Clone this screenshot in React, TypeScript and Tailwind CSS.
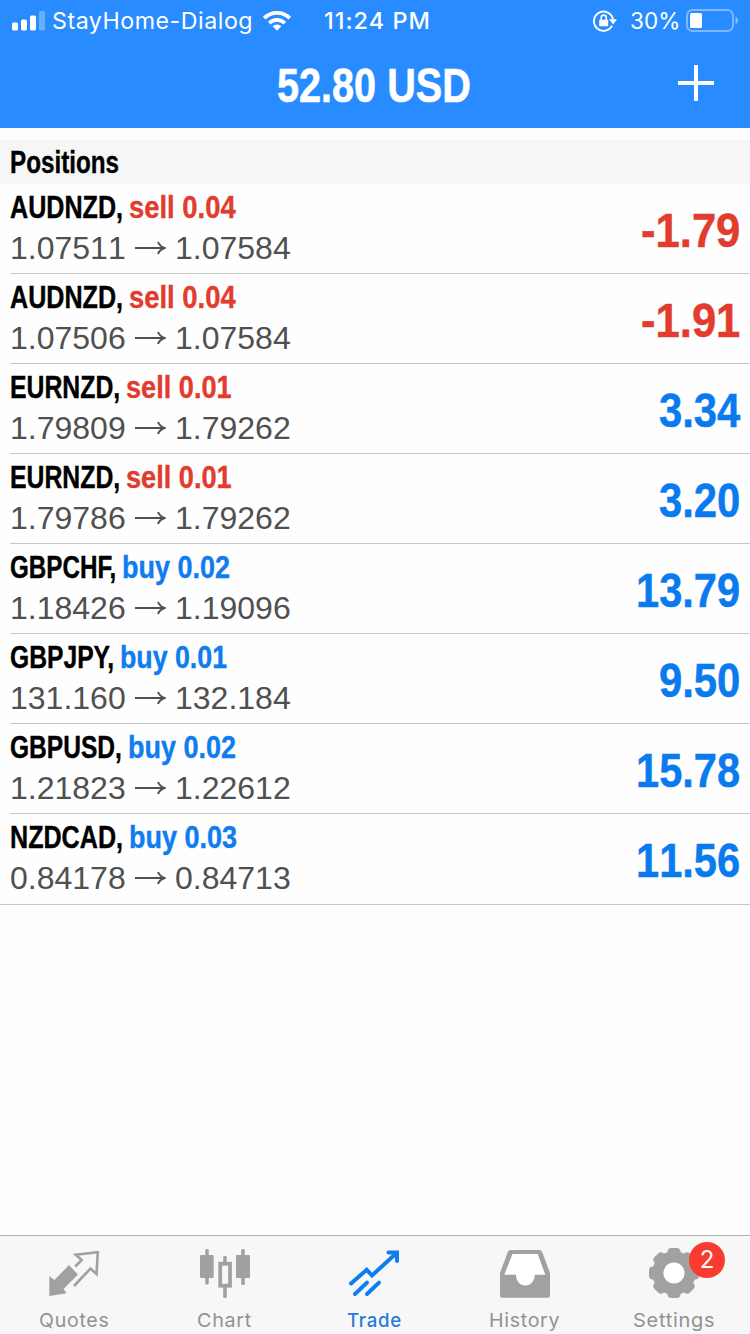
import React, { useLayoutEffect, useRef, useState } from "react";

type FitTextProps = {
  width: number;
  className?: string;
  children: React.ReactNode;
};

// Squeezes a line of text horizontally so it takes exactly `width` pixels.
const FitText = ({ width, className = "", children }: FitTextProps) => {
  const ref = useRef<HTMLSpanElement>(null);
  const [scale, setScale] = useState(1);

  useLayoutEffect(() => {
    if (ref.current) setScale(width / ref.current.offsetWidth);
  }, [width, children]);

  return (
    <span className={`block shrink-0 whitespace-pre ${className}`} style={{ width }}>
      <span
        ref={ref}
        className="inline-block origin-left"
        style={{ transform: `scaleX(${scale})` }}
      >
        {children}
      </span>
    </span>
  );
};

type Position = {
  symbol: string;
  symbolWidth: number;
  side: "buy" | "sell";
  volume: string;
  sideWidth: number;
  open: string;
  current: string;
  profit: string;
  profitWidth: number;
};

const positions: Position[] = [
  { symbol: "AUDNZD", symbolWidth: 113, side: "sell", volume: "0.04", sideWidth: 107, open: "1.07511", current: "1.07584", profit: "-1.79", profitWidth: 99 },
  { symbol: "AUDNZD", symbolWidth: 113, side: "sell", volume: "0.04", sideWidth: 107, open: "1.07506", current: "1.07584", profit: "-1.91", profitWidth: 99 },
  { symbol: "EURNZD", symbolWidth: 110, side: "sell", volume: "0.01", sideWidth: 106, open: "1.79809", current: "1.79262", profit: "3.34", profitWidth: 81 },
  { symbol: "EURNZD", symbolWidth: 110, side: "sell", volume: "0.01", sideWidth: 106, open: "1.79786", current: "1.79262", profit: "3.20", profitWidth: 81 },
  { symbol: "GBPCHF", symbolWidth: 106, side: "buy", volume: "0.02", sideWidth: 108, open: "1.18426", current: "1.19096", profit: "13.79", profitWidth: 104 },
  { symbol: "GBPJPY", symbolWidth: 104, side: "buy", volume: "0.01", sideWidth: 107, open: "131.160", current: "132.184", profit: "9.50", profitWidth: 81 },
  { symbol: "GBPUSD", symbolWidth: 112, side: "buy", volume: "0.02", sideWidth: 108, open: "1.21823", current: "1.22612", profit: "15.78", profitWidth: 104 },
  { symbol: "NZDCAD", symbolWidth: 113, side: "buy", volume: "0.03", sideWidth: 108, open: "0.84178", current: "0.84713", profit: "11.56", profitWidth: 104 },
];

const StatusBar = () => {
  return (
    <div className="flex h-10 items-center pl-3 pt-px font-['Inter',sans-serif] text-[23px] leading-10">
      <svg width="34" height="22" viewBox="0 0 34 22" fill="#fff">
        <rect x="0" y="12.5" width="6" height="8" rx="1.5" />
        <rect x="9" y="9.5" width="6" height="11" rx="1.5" />
        <rect x="18" y="5.5" width="6" height="15" rx="1.5" />
        <rect x="27" y="1" width="6" height="19.5" rx="1.5" opacity="0.3" />
      </svg>
      <FitText width={201} className="ml-[6px] tracking-[0.5px]">
        StayHome-Dialog
      </FitText>
      <svg className="ml-[9px]" width="30" height="22" viewBox="0 0 30 22" fill="none" stroke="#fff" strokeWidth="3.8">
        <path d="M2.2 8.2a18 18 0 0 1 25.6 0" />
        <path d="M7.2 13.2a11 11 0 0 1 15.6 0" />
        <path d="M15 20.8l-4.4-4.6a6.3 6.3 0 0 1 8.8 0z" fill="#fff" stroke="none" />
      </svg>
      <FitText width={107} className="ml-8 font-medium tracking-[1px]">
        11:24 PM
      </FitText>
      <svg className="ml-[161px]" width="26" height="24" viewBox="0 0 26 24" fill="none" stroke="#fff">
        <path d="M20 16.8A9.6 9.6 0 1 1 21 10.5" strokeWidth="1.9" />
        <path d="M17 10.2h8l-3.8 5.2z" fill="#fff" stroke="none" />
        <rect x="7.2" y="10.8" width="9" height="6.4" rx="0.8" fill="#fff" stroke="none" />
        <path d="M9.2 11V8.6a2.5 2.5 0 0 1 5 0V11" strokeWidth="1.6" />
      </svg>
      <FitText width={50} className="ml-3">
        30%
      </FitText>
      <svg className="ml-[6px]" width="54" height="24" viewBox="0 0 54 24">
        <rect x="1" y="1" width="46" height="21" rx="5.5" fill="none" stroke="#fff" strokeWidth="2" opacity="0.4" />
        <rect x="4" y="4" width="12" height="15" rx="1.5" fill="#fff" />
        <path d="M49.5 8c3.5 1 3.5 6 0 7z" fill="#fff" opacity="0.45" />
      </svg>
    </div>
  );
};

const Header = () => {
  return (
    <header className="h-32 shrink-0 bg-[#288bff] text-white">
      <StatusBar />
      <div className="flex h-[88px] items-center justify-between pl-[277px] pr-9">
        <FitText width={194} className="pt-[3px] text-5xl font-bold [-webkit-text-stroke:0.6px]">
          52.80 USD
        </FitText>
        <svg className="mb-[2px]" width="36" height="36" viewBox="0 0 36 36" stroke="#fff" strokeWidth="4">
          <path d="M18 0v36M0 18h36" />
        </svg>
      </div>
    </header>
  );
};

const PositionRow = ({ position, last }: { position: Position; last: boolean }) => {
  const { symbol, symbolWidth, side, volume, sideWidth, open, current, profit, profitWidth } = position;
  return (
    <li className={last ? "h-[91px] border-b border-[#c8c7cc] pl-2.5" : "h-[90px] pl-2.5"}>
      <div className={`flex h-[90px] justify-between pr-2.5 ${last ? "" : "border-b border-[#c8c7cc]"}`}>
        <div className="pt-[3px] text-[32px] leading-10">
          <div className="flex font-bold [-webkit-text-stroke:0.4px]">
            <FitText width={symbolWidth} className="text-black">
              {symbol + ","}
            </FitText>
            <FitText
              width={sideWidth}
              className={side === "buy" ? "ml-[6px] text-[#0f7cf0]" : "ml-[6px] text-[#e23c2e]"}
            >
              {side + " " + volume}
            </FitText>
          </div>
          <div className="mt-px flex items-center text-[#505050] [font-kerning:none]">
            <span className="w-[116px]">{open}</span>
            <svg className="ml-[9px]" width="31" height="16" viewBox="0 0 31 16" fill="none" stroke="currentColor" strokeWidth="2">
              <path d="M0 8h29" />
              <path d="M23 2c1.2 3 3.5 5 6.5 6-3 1-5.3 3-6.5 6" />
            </svg>
            <span className="ml-[9px]">{current}</span>
          </div>
        </div>
        <FitText
          width={profitWidth}
          className={
            profit.startsWith("-")
              ? "pt-[2px] text-5xl font-bold leading-[90px] text-[#e23c2e] [font-kerning:none] [-webkit-text-stroke:0.5px]"
              : "pt-[2px] text-5xl font-bold leading-[90px] text-[#0a7aef] [font-kerning:none] [-webkit-text-stroke:0.5px]"
          }
        >
          {profit}
        </FitText>
      </div>
    </li>
  );
};

const QuotesIcon = () => (
  <svg width="54" height="54" viewBox="0 0 54 54" fill="none">
    <path d="M1.3 29v20l17.4-2.700-3.200-4.300 14.500-14.500-9-9.500L6.500 33z" fill="#a1a1a1" />
    <path d="M27.2 19.500l6.500-6.500-6-5.300L49.800 5.300l-1.300 21.700-6-5.500L26 39" stroke="#a1a1a1" strokeWidth="2.6" />
  </svg>
);

const ChartIcon = () => (
  <svg width="54" height="54" viewBox="0 0 54 54" fill="#a1a1a1">
    <rect x="2" y="8" width="13.7" height="23" rx="1" />
    <rect x="7.2" y="2" width="3.6" height="35.5" rx="1.5" />
    <rect x="38" y="8" width="14" height="23" rx="1" />
    <rect x="43.2" y="2" width="3.6" height="36" rx="1.5" />
    <rect x="25.2" y="8.7" width="3.6" height="7" rx="1.5" />
    <rect x="25.2" y="39" width="3.6" height="12" rx="1.5" />
    <rect x="22.2" y="16.7" width="9.8" height="22" fill="none" stroke="#a1a1a1" strokeWidth="3.8" />
  </svg>
);

const TradeIcon = () => (
  <svg width="54" height="54" viewBox="0 0 54 54" fill="none" stroke="#0f7cf0" strokeWidth="4">
    <path d="M3 36.500l15.700-13.700 5.300 5.700L48 6.500" strokeLinecap="round" />
    <path d="M40.500 5.500h8.500v8.500" strokeLinecap="round" />
    <path d="M7 47L19 35.600M19 47l12-11.400" strokeLinecap="round" />
  </svg>
);

const HistoryIcon = () => (
  <svg width="54" height="54" viewBox="0 0 54 54" fill="#a1a1a1" fillRule="evenodd">
    <path d="M13 3h28.500q2 0 2.700 2L52 26v22.500q0 2.300-2.300 2.300H4.300Q2 50.800 2 48.500V26L9.800 5q.8-2 3.200-2z" />
    <path d="M14.500 7L6.300 27.700H18c0 6 4 10.800 9.300 10.800s9.400-4.800 9.400-10.800h10.600L39.700 7z" fill="#fff" />
  </svg>
);

const SettingsIcon = () => (
  <svg width="54" height="54" viewBox="0 0 54 54" fill="#a1a1a1">
    <circle cx="26" cy="26" r="21.8" />
    {[0, 45, 90, 135, 180, 225, 270, 315].map((angle) => (
      <rect key={angle} x="19.5" y="1" width="13" height="12" rx="4" transform={`rotate(${angle} 26 26)`} />
    ))}
    <circle cx="26" cy="26" r="10.6" fill="#fff" />
  </svg>
);

const tabs = [
  { label: "Quotes", width: 71, Icon: QuotesIcon },
  { label: "Chart", width: 55, Icon: ChartIcon },
  { label: "Trade", width: 55, Icon: TradeIcon, active: true },
  { label: "History", width: 71, Icon: HistoryIcon },
  { label: "Settings", width: 82, Icon: SettingsIcon, badge: 2 },
];

const TabBar = () => {
  return (
    <nav className="grid h-[99px] shrink-0 grid-cols-5 border-t border-[#b2b2b2] bg-[#f7f7f7]">
      {tabs.map(({ label, width, Icon, active, badge }) => (
        <div key={label} className="relative flex flex-col items-center pr-0.5 pt-[11px]">
          <div className="h-[54px] pl-0.5">
            <Icon />
          </div>
          <FitText
            width={width}
            className={
              active
                ? "mt-2 font-['Inter',sans-serif] text-[19px] font-medium leading-6 tracking-[0.7px] text-[#2a7bd6]"
                : "mt-2 font-['Inter',sans-serif] text-[19px] leading-6 tracking-[0.7px] text-[#929292]"
            }
          >
            {label}
          </FitText>
          {badge && (
            <span className="absolute left-[89px] top-[6px] flex h-9 w-9 items-center justify-center rounded-full bg-[#fb3a30] font-['Inter',sans-serif] text-2xl text-white">
              {badge}
            </span>
          )}
        </div>
      ))}
    </nav>
  );
};

const App = () => {
  return (
    <div className="flex h-[1334px] w-[750px] flex-col overflow-hidden bg-white font-['Liberation_Sans',Arial,sans-serif]">
      <Header />
      <main className="flex-1 bg-[#fefefe] pt-3">
        <h2 className="h-11 bg-[#f6f6f6] pl-2.5 text-[32px] font-bold leading-[44px] text-black [-webkit-text-stroke:0.4px]">
          <FitText width={109}>Positions</FitText>
        </h2>
        <ul>
          {positions.map((position, i) => (
            <PositionRow key={i} position={position} last={i === positions.length - 1} />
          ))}
        </ul>
      </main>
      <TabBar />
    </div>
  );
};

export default App;
